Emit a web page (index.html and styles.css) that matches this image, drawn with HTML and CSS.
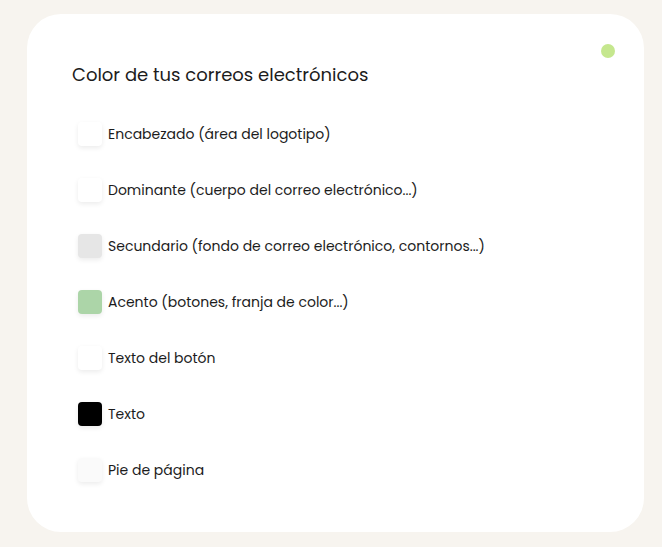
FILE: index.html
```html
<!DOCTYPE html>
<html lang="es">
<head>
  <meta charset="UTF-8">
  <meta name="viewport" content="width=device-width, initial-scale=1.0">
  <title>Colores del correo</title>
  <link rel="stylesheet" href="styles.css">
</head>
<body>
  <div class="card">
    <span class="status-dot"></span>

    <h2 class="card-title">Color de tus correos electrónicos</h2>

    <!-- Color list -->
    <ul class="color-list">
      <li class="color-row">
        <span class="swatch swatch-white"></span>
        <span class="color-label">Encabezado (área del logotipo)</span>
      </li>
      <li class="color-row">
        <span class="swatch swatch-white"></span>
        <span class="color-label">Dominante (cuerpo del correo electrónico...)</span>
      </li>
      <li class="color-row">
        <span class="swatch swatch-grey"></span>
        <span class="color-label">Secundario (fondo de correo electrónico, contornos...)</span>
      </li>
      <li class="color-row">
        <span class="swatch swatch-green"></span>
        <span class="color-label">Acento (botones, franja de color...)</span>
      </li>
      <li class="color-row">
        <span class="swatch swatch-white"></span>
        <span class="color-label">Texto del botón</span>
      </li>
      <li class="color-row">
        <span class="swatch swatch-black"></span>
        <span class="color-label">Texto</span>
      </li>
      <li class="color-row">
        <span class="swatch swatch-offwhite"></span>
        <span class="color-label">Pie de página</span>
      </li>
    </ul>
  </div>
</body>
</html>
```

FILE: styles.css
```css
/* General Styles */
body {
  font-family: Poppins, "Noto Sans", sans-serif;
  margin: 0;
  padding: 14px 18px 15px 27px;
  background: #f7f4ef;
  color: #1c1c1c;
}

/* Card */
.card {
  position: relative;
  background: #fff;
  border-radius: 34px;
  padding: 49px 45px 40px 45px;
  height: 429px;
}

.status-dot {
  position: absolute;
  top: 30px;
  right: 29px;
  width: 14px;
  height: 14px;
  border-radius: 50%;
  background: #c5e78e;
}

.card-title {
  margin: 0 0 35px;
  font-size: 18px;
  font-weight: 400;
  line-height: 24px;
}

/* Color list */
.color-list {
  list-style: none;
  margin: 0;
  padding: 0 0 0 6px;
  display: flex;
  flex-direction: column;
  gap: 32px;
}

.color-row {
  display: flex;
  align-items: center;
  gap: 6px;
  height: 24px;
}

.swatch {
  width: 24px;
  height: 24px;
  border-radius: 4px;
  box-shadow: 0 2px 5px rgba(0, 0, 0, 0.08);
  flex-shrink: 0;
}

.swatch-white { background: #fff; }
.swatch-grey { background: #e6e6e6; }
.swatch-green { background: #acd5a8; }
.swatch-black { background: #000; }
.swatch-offwhite { background: #fafafa; }

.color-label {
  font-size: 14px;
  line-height: 20px;
}
```
